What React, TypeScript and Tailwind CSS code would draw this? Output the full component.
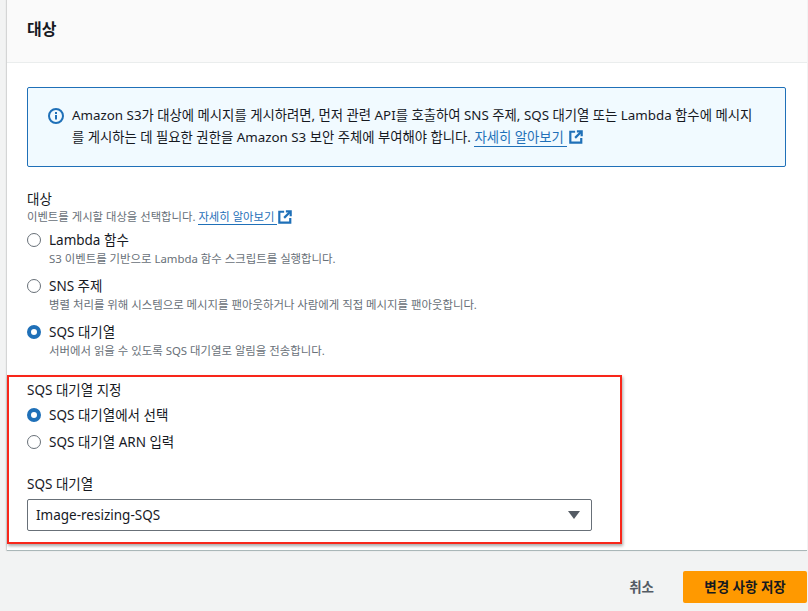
import { FC } from 'react';

const font = "font-['Noto_Sans','Noto_Sans_CJK_KR',sans-serif]";

const ExternalIcon: FC<{ className?: string }> = ({ className }) => (
  <svg viewBox="0 0 16 16" fill="none" stroke="#1f70b8" strokeWidth="2.5" className={className}>
    <path d="M7 2H1.5v12.5H14V9" />
    <path d="M9 1.5h5.5V7" />
    <path d="M14 2L7 9" />
  </svg>
);

const Radio: FC<{ checked?: boolean }> = ({ checked }) =>
  checked ? (
    <span className="block w-[14px] h-[14px] rounded-full border-[4px] border-[#1f70b8] bg-white shrink-0" />
  ) : (
    <span className="block w-[14px] h-[14px] rounded-full border border-[#687078] bg-white shrink-0" />
  );

const Option: FC<{ label: string; hint?: string; checked?: boolean; className?: string }> = ({
  label,
  hint,
  checked,
  className,
}) => (
  <div className={`flex gap-2 ${className ?? ''}`}>
    <div className="h-[20px] flex items-center">
      <Radio checked={checked} />
    </div>
    <div>
      <div className="text-[13.5px] leading-[20px] text-[#16191f]">{label}</div>
      {hint && <div className="text-[11.4px] leading-[17px] text-[#687078]">{hint}</div>}
    </div>
  </div>
);

export default function App() {
  return (
    <div className={`relative w-[808px] h-[611px] overflow-hidden bg-[#f2f3f3] pl-[7px] pr-[1px] ${font}`}>
      <div className="h-[551px] bg-white border-b border-[#aab7b8] shadow-[-1px_0_1px_rgba(0,0,0,0.12)]">
        <div className="h-[63px] bg-[#fafafa] border-b border-[#eaeded] pl-[20px] pt-[17px]">
          <h2 className="text-[16px] leading-[24px] font-bold text-[#16191f]">대상</h2>
        </div>

        <div className="pl-[20px] pt-[24px]">
          <div className="w-[759px] h-[80px] flex gap-[8px] bg-[#f1faff] border border-[#1f70b8] rounded-[2px] pl-[20px] pt-[16px]">
            <svg viewBox="0 0 16 16" className="w-[16px] h-[16px] mt-[4px] shrink-0">
              <circle cx="8" cy="8" r="7" fill="none" stroke="#1f70b8" strokeWidth="2" />
              <path d="M8 7v4.5M8 4v2" stroke="#1f70b8" strokeWidth="2" />
            </svg>
            <p className="w-[700px] text-[13.35px] leading-[22px] text-[#16191f]">
              Amazon S3가 대상에 메시지를 게시하려면, 먼저 관련 API를 호출하여 SNS 주제, SQS 대기열 또는 Lambda 함수에 메시지
              <br />
              를 게시하는 데 필요한 권한을 Amazon S3 보안 주체에 부여해야 합니다.{' '}
              <a className="text-[#1f70b8] border-b border-[#1f70b8]">자세히 알아보기 </a>
              <ExternalIcon className="inline-block w-[14px] h-[14px] ml-[2px] align-[-2px]" />
            </p>
          </div>

          <div className="mt-[22px] text-[13.5px] leading-[20px] text-[#16191f]">대상</div>
          <div className="text-[11.35px] leading-[16px] text-[#687078]">
            이벤트를 게시할 대상을 선택합니다.{' '}
            <a className="text-[#1f70b8] border-b border-[#1f70b8]">자세히 알아보기 </a>
            <ExternalIcon className="inline-block w-[14px] h-[14px] ml-[1px] align-[-3px]" />
          </div>

          <Option className="mt-[5px]" label="Lambda 함수" hint="S3 이벤트를 기반으로 Lambda 함수 스크립트를 실행합니다." />
          <Option className="mt-[9px]" label="SNS 주제" hint="병렬 처리를 위해 시스템으로 메시지를 팬아웃하거나 사람에게 직접 메시지를 팬아웃합니다." />
          <Option className="mt-[9px]" checked label="SQS 대기열" hint="서버에서 읽을 수 있도록 SQS 대기열로 알림을 전송합니다." />

          <div className="mt-[21px] text-[13.5px] leading-[20px] text-[#16191f]">SQS 대기열 지정</div>
          <Option className="mt-[5px]" checked label="SQS 대기열에서 선택" />
          <Option className="mt-[7px]" label="SQS 대기열 ARN 입력" />

          <div className="mt-[22px] text-[13.5px] leading-[20px] text-[#16191f]">SQS 대기열</div>
          <div className="mt-[5px] w-[565px] h-[32px] flex items-center justify-between bg-white border border-[#687078] rounded-[2px] pl-[8px] pr-[11px]">
            <span className="text-[13.5px] text-[#16191f]">Image-resizing-SQS</span>
            <svg viewBox="0 0 12 8" className="w-[12px] h-[8px]">
              <path d="M0 0h12L6 8z" fill="#545b64" />
            </svg>
          </div>
        </div>
      </div>

      <div className="flex items-center justify-end pt-[20px]">
        <span className="mr-[29px] text-[13.5px] font-bold text-[#545b64]">취소</span>
        <button className="w-[124px] h-[32px] bg-[#ff9900] rounded-[2px] text-[13.5px] font-bold text-[#16191f]">
          변경 사항 저장
        </button>
      </div>

      {/* hand-drawn highlight box on the screenshot */}
      <div className="absolute left-[7px] top-[375px] w-[615px] h-[169px] border-[2px] border-[#f8261a] shadow-[1px_2px_3px_rgba(0,0,0,0.35)]" />
    </div>
  );
}
